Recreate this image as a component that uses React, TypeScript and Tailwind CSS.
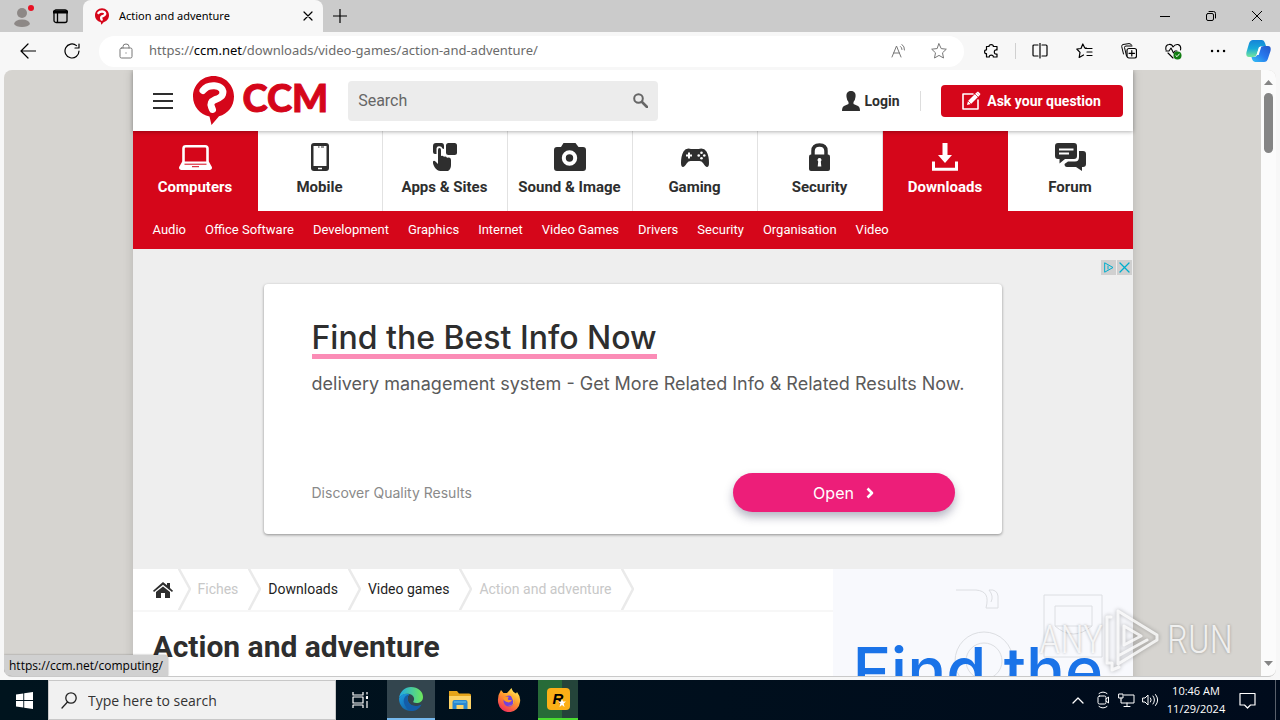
import React from "react";

const UI = "font-['Open_Sans','Noto_Sans',sans-serif]";

function Icon({ w = 20, h = w, box, className = "", children }: { w?: number; h?: number; box?: string; className?: string; children: React.ReactNode }) {
  return (
    <svg width={w} height={h} viewBox={box ?? `0 0 ${w} ${h}`} fill="none" stroke="currentColor" strokeLinecap="round" strokeLinejoin="round" className={`shrink-0 ${className}`} aria-hidden="true">
      {children}
    </svg>
  );
}

function CcmBubble({ w, h }: { w: number; h: number }) {
  return (
    <svg width={w} height={h} viewBox="0 0 41 49" aria-hidden="true" className="shrink-0">
      <path d="M20.500 0C9 0 0 9 0 20.500C0 30.500 7 38.500 16.500 40.500L18.500 49L26 40.300C34.800 38 41 30.300 41 20.500C41 9 32 0 20.500 0Z" fill="#d5061a" />
      <path d="M10 14.500C13 10.500 17 9.500 21.500 9.800C28 10.300 31 14 29.500 18.500C28.500 21.500 25 22.500 22 23.700C18 25.300 17.200 28 18.500 31L19.500 33.500" fill="none" stroke="#fff" strokeWidth="7" strokeLinejoin="round" strokeLinecap="round" />
    </svg>
  );
}

const glyphs: Record<string, React.ReactNode> = {
  Computers: (
    <svg width="33" height="28" viewBox="0 0 33 28" fill="none">
      <path d="M4.500 20V5.500Q4.500 3.200 6.800 3.200H26.200Q28.500 3.200 28.500 5.500V20" stroke="#fff" strokeWidth="2.600" />
      <path d="M3.200 19.500H29.800L33 25.300Q33 28 30.500 28H2.500Q0 28 0 25.300Z" transform="translate(0 -1)" fill="#fff" />
      <path d="M5.500 21.200H27.500M13 23.700H20" stroke="#d5061a" strokeWidth="1" />
    </svg>
  ),
  Mobile: (
    <svg width="18" height="28" viewBox="0 0 18 28">
      <rect width="18" height="28" rx="3" fill="#2e2e2e" />
      <rect x="2.500" y="3" width="13" height="20" fill="#fff" />
      <path d="M7 4H8.500M10 4H13" stroke="#2e2e2e" />
      <path d="M7 25.500H11" stroke="#fff" strokeWidth="1.500" />
    </svg>
  ),
  "Apps & Sites": (
    <svg width="24" height="28" viewBox="0 0 24 28" fill="#2e2e2e">
      <rect x="13" y="0" width="11" height="12" rx="2.500" />
      <path d="M0 3Q0 0 3 0H8.500Q11 0 11 3V6L9.500 5.500Q8.500 2.800 5.800 3.200Q3.300 3.600 3.500 6.500V11H2Q0 11 0 9Z" />
      <path d="M5 7Q5 5 6.500 5Q8 5 8 7V13Q9.500 12 11 13.800Q13 13 14 14.800Q18 13.500 18 17.500V22Q18 26 15 28H7.500Q4 28 1.500 24Q-.5 20.500 0 18.500Q.8 17 2.500 18.500L5 21Z" />
    </svg>
  ),
  "Sound & Image": (
    <svg width="32" height="28" viewBox="0 0 32 28">
      <path d="M3 4H7L9.500 0H21.500L24.500 4H29Q32 4 32 7V25Q32 28 29 28H3Q0 28 0 25V7Q0 4 3 4Z" fill="#2e2e2e" />
      <circle cx="15.500" cy="15" r="5.700" fill="none" stroke="#fff" strokeWidth="4" />
    </svg>
  ),
  Gaming: (
    <svg width="30" height="28" viewBox="0 0 30 28">
      <path d="M3.500 8.500Q6 4.500 11 6H18.500Q24 4.500 26.500 8.500Q29 13 29 20Q29 24 27 24Q25.500 24 23 20Q21.700 18 19.500 18H10.500Q8.300 18 7 20Q4.500 24 3 24Q1 24 1 20Q1 13 3.500 8.500Z" fill="#2e2e2e" />
      <path d="M6 12.500H12M9 9.500V15.500" stroke="#fff" strokeWidth="2" />
      <g fill="#fff"><circle cx="21.500" cy="9.700" r="1.300" /><circle cx="18.700" cy="12.500" r="1.300" /><circle cx="24.300" cy="12.500" r="1.300" /><circle cx="21.500" cy="15.300" r="1.300" /></g>
    </svg>
  ),
  Security: (
    <svg width="21" height="28" viewBox="0 0 21 28">
      <path d="M4 13V8Q4 2 10.500 2Q17 2 17 8V13" fill="none" stroke="#2e2e2e" strokeWidth="3.500" />
      <rect y="11.500" width="21" height="16.500" rx="2" fill="#2e2e2e" />
      <path d="M10.500 15A2 2 0 0 1 11.800 18.500L12.300 23.500H8.700L9.200 18.500A2 2 0 0 1 10.500 15Z" fill="#fff" />
    </svg>
  ),
  Downloads: (
    <svg width="26" height="28" viewBox="0 0 26 28">
      <path d="M10.500 0H15.500V12H20L13 20L6 12H10.500Z" fill="#fff" />
      <path d="M1.500 18.500V26.200H24.500V18.500" fill="none" stroke="#fff" strokeWidth="3" />
    </svg>
  ),
  Forum: (
    <svg width="31" height="28" viewBox="0 0 31 28">
      <path d="M3 0H19Q22 0 22 3V13Q22 16 19 16H10L4.500 20.500V16H3Q0 16 0 13V3Q0 0 3 0Z" fill="#2e2e2e" />
      <path d="M24 8H28Q31 8 31 11V21Q31 24 28 24H27V28L21 24H12Q9.500 24 9.500 21L13 18.500H20Q24 18.500 24 14Z" fill="#2e2e2e" />
      <path d="M4 6.500H18.500M4 10.500H14" stroke="#fff" strokeWidth="2" />
    </svg>
  ),
};

const sections = ["Computers", "Mobile", "Apps & Sites", "Sound & Image", "Gaming", "Security", "Downloads", "Forum"];
const topics = ["Audio", "Office Software", "Development", "Graphics", "Internet", "Video Games", "Drivers", "Security", "Organisation", "Video"];
const crumbs = [
  { label: "Fiches", muted: true },
  { label: "Downloads", muted: false },
  { label: "Video games", muted: false },
  { label: "Action and adventure", muted: true },
];

function TabStrip() {
  return (
    <div className="flex h-8 shrink-0 bg-[#cbcbcb]">
      <div className="flex w-[83px] items-center justify-between pr-[15px] pl-3">
        <button aria-label="Profile" className="relative">
          <svg width="23" height="24" viewBox="0 0 23 24"><circle cx="10" cy="9" r="5" fill="#8d8886" /><path d="M2 20Q3 15.500 10 15.500Q17 15.500 18 20Q16 23 10 23Q4 23 2 20Z" fill="#8d8886" /><circle cx="19" cy="4" r="3" fill="#e81123" /></svg>
        </button>
        <button aria-label="Tab actions">
          <Icon w={15} h={15}><rect x="1" y="1" width="13" height="12.500" rx="2" strokeWidth="1.300" /><path d="M1 3H14" strokeWidth="3" /><path d="M4.500 3V13" strokeWidth="1.300" /></Icon>
        </button>
      </div>
      <div className="flex w-60 items-center rounded-t-lg bg-[#f7f7f7] pr-[10px] pl-3">
        <CcmBubble w={14} h={17} />
        <span className="ml-[10px] flex-1 font-['Noto_Sans',sans-serif] text-[11px] text-black">Action and adventure</span>
        <button aria-label="Close tab"><Icon w={10}><path d="M1 1L9 9M9 1L1 9" strokeWidth="1.200" /></Icon></button>
      </div>
      <button aria-label="New tab" className="ml-[10px]"><Icon w={14}><path d="M7 0V14M0 7H14" strokeWidth="1.200" /></Icon></button>
      <div className="ml-auto flex items-center gap-9 pr-[18px]">
        <button aria-label="Minimize"><Icon w={10}><path d="M0 5.500H10" /></Icon></button>
        <button aria-label="Restore"><Icon w={10}><rect x=".5" y="2.500" width="7" height="7" rx="1.500" /><path d="M3 .5H7.500Q9.500 .5 9.500 2.500V7" /></Icon></button>
        <button aria-label="Close"><Icon w={10}><path d="M0 0L10 10M10 0L0 10" /></Icon></button>
      </div>
    </div>
  );
}

function Toolbar() {
  return (
    <div className="flex h-[38px] shrink-0 items-center pr-[9px] pl-5">
      <button aria-label="Back"><Icon w={16}><path d="M15.500 8H1M8 1L1 8L8 15" strokeWidth="1.200" /></Icon></button>
      <button aria-label="Refresh" className="ml-7"><Icon w={16}><path d="M15 8A7 7 0 1 1 12.500 2.600M15 1V5H11" strokeWidth="1.200" /></Icon></button>
      <div className="ml-[19px] flex h-[31px] flex-1 items-center rounded-full bg-white pr-[17px] pl-5">
        <Icon w={14} h={16} className="text-[#777]"><rect x="1" y="5" width="12" height="10" rx="1.500" /><path d="M4 5V3.500Q4 1 7 1Q10 1 10 3.500V5M7 9.800V10.200" /></Icon>
        <span className="ml-4 flex-1 font-['Noto_Sans',sans-serif] text-[13px] text-[#6b6b6b]">https://<span className="text-black">ccm.net</span>/downloads/video-games/action-and-adventure/</span>
        <button aria-label="Read aloud" className="text-[#777]"><Icon w={16}><path d="M1 14L5.500 3L10 14M2.500 10H8.500M9.500 3.500Q11 4.500 11 6.500M11 1.500Q13.800 3.500 13.500 7" /></Icon></button>
        <button aria-label="Add to favorites" className="ml-6 text-[#777]"><Icon w={16}><path d="M8 .8L10.200 5.600L15.300 6.200L11.500 9.800L12.500 15L8 12.400L3.500 15L4.500 9.800L.7 6.200L5.800 5.600Z" /></Icon></button>
      </div>
      <button aria-label="Extensions" className="ml-5"><Icon w={15}><path d="M2.500 2.500H5Q5 .6 7.200.6Q9.400.6 9.400 2.500H13V6Q10.300 5.500 10.300 8Q10.300 10.500 13 10V13H9.300Q9.500 11.200 7.300 11.200Q5.100 11.200 5.300 13H2.500V9.700Q.6 9.700.6 7.700Q.6 5.800 2.500 5.800Z" strokeWidth="1.200" /></Icon></button>
      <div className="ml-4 h-4 w-px bg-[#d0d0d0]" />
      <button aria-label="Split screen" className="ml-4"><Icon w={16}><path d="M6 2H2Q1 2 1 3V12Q1 13 2 13H6M10 2H14Q15 2 15 3V12Q15 13 14 13H10M8 0V15" strokeWidth="1.200" /></Icon></button>
      <button aria-label="Favorites" className="ml-7"><Icon w={17} h={16}><path d="M10.500 5L8.800 5L6.800 1L5 5.500L.8 6L4 9.400L3.200 14.500L7.500 12M9.500 5.500H16M11 9H16M11 12.500H16" strokeWidth="1.200" /></Icon></button>
      <button aria-label="Collections" className="ml-7"><Icon w={16}><path d="M2.500 11L.7 3.500Q.5 2 2 1.500L8 .6Q10 .5 10.500 2M5.500 13L3.500 4.500Q3.300 3.200 5 3L11 3" /><rect x="6" y="5.500" width="9.500" height="9.500" rx="2" strokeWidth="1.200" /><path d="M10.800 7.500V13M8 10.300H13.500" strokeWidth="1.200" /></Icon></button>
      <button aria-label="Browser essentials" className="ml-7"><Icon w={17} h={17}><path d="M1 7Q0 2 4 1.500Q7 1 8 4Q10 1 13 1.500Q16.500 2.500 15.500 7M3 10L8 15M1 8H4L6 5L8.500 10L10 8H12" strokeWidth="1.100" /><circle cx="12.500" cy="12.500" r="4" fill="#107c10" stroke="none" /><path d="M10.800 12.500L12 13.700L14.300 11" stroke="#fff" /></Icon></button>
      <button aria-label="Settings and more" className="ml-7"><Icon w={16} h={4}><path d="M2 2H2.100M8 2H8.100M14 2H14.100" strokeWidth="2.400" /></Icon></button>
      <button aria-label="Copilot" className="ml-5">
        <svg width="25" height="24" viewBox="0 0 25 24">
          <defs>
            <linearGradient id="cpA" x1="0" y1="0" x2="0" y2="1"><stop stopColor="#1684d8" /><stop offset=".5" stopColor="#18a9d9" /><stop offset="1" stopColor="#76e69b" /></linearGradient>
            <linearGradient id="cpB" x1="0" y1="1" x2="1" y2="0"><stop stopColor="#35c4f5" /><stop offset=".5" stopColor="#2878ed" /><stop offset="1" stopColor="#2656c8" /></linearGradient>
          </defs>
          <path d="M7 1H16Q18 1 19 4L20 7H16Q13.500 7 12.500 10L11 15Q10 18 7 18H3Q-.5 18 .5 13L3 4.500Q4 1 7 1Z" fill="url(#cpA)" />
          <path d="M18 23H9Q7 23 6 20L5.500 18H8Q11 18 12 14L14 9Q15 7 18 7H22Q25.500 7 24.500 12L22 19.500Q21 23 18 23Z" fill="url(#cpB)" />
          <path d="M10.500 16L13 8H15.200L12.700 16Z" fill="#fff" />
        </svg>
      </button>
    </div>
  );
}

function SiteHeader() {
  return (
    <header className="relative z-10 flex h-[61px] items-center bg-white pr-[10px] pl-5 shadow-[0_1px_4px_rgba(0,0,0,0.3)]">
      <button aria-label="Menu" className="text-[#2e2e2e]"><Icon w={20} h={18}><path d="M0 2H20M0 9H20M0 16H20" strokeWidth="2" strokeLinecap="butt" /></Icon></button>
      <a href="#home" className="ml-5 flex items-center gap-[9px] text-[#d5061a]">
        <CcmBubble w={41} h={49} />
        <span className="pb-2 font-['Lato',sans-serif] text-[38px] leading-[42px] font-black [-webkit-text-stroke:1px_#d5061a]">CCM</span>
      </a>
      <form className="ml-5 flex h-10 w-[310px] items-center rounded bg-[#ececec] pr-[10px] pl-[10px]" onSubmit={(e) => e.preventDefault()}>
        <input aria-label="Search" placeholder="Search" className="min-w-0 flex-1 bg-transparent text-base text-[#333] outline-none placeholder:text-[#666]" />
        <button aria-label="Submit search" className="text-[#666]"><Icon w={15}><circle cx="5.500" cy="5.500" r="4.300" strokeWidth="2" /><path d="M9 9L14 14" strokeWidth="2.600" /></Icon></button>
      </form>
      <a href="#login" className="ml-auto flex items-center gap-1 text-sm font-bold text-[#2e2e2e]">
        <svg width="18" height="20" viewBox="0 0 18 20" fill="#2e2e2e" aria-hidden="true"><path d="M9 0C12.500 0 14 2.500 13.500 6Q13.200 9 11.500 11V13L16 15Q18 16 18 20H0Q0 16 2 15L6.500 13V11Q4.800 9 4.500 6C4 2.500 5.500 0 9 0Z" /></svg>
        Login
      </a>
      <div className="mx-5 h-5 w-px bg-[#ddd]" />
      <a href="#ask" className="flex h-8 w-[182px] items-center justify-center gap-[6px] rounded bg-[#d5061a] text-sm font-bold text-white">
        <Icon w={19} h={19}><path d="M11 3H1V18H16V9" strokeWidth="1.600" /><path d="M5 14L6 10L14.500 1.500L17.500 4.500L9 13Z" fill="#fff" stroke="none" /><path d="M14.500 1.500L16 .5L18.500 3L17.500 4.500" fill="#fff" stroke="none" /><path d="M6 10L9 13M13 3L16 6" stroke="#d5061a" strokeWidth=".7" /></Icon>
        Ask your question
      </a>
    </header>
  );
}

function SiteNav() {
  return (
    <nav>
      <ul className="grid grid-cols-8 bg-white">
        {sections.map((s) => {
          const active = s === "Computers" || s === "Downloads";
          return (
            <li key={s} className={active ? "bg-[#d5061a] text-white" : "border-r border-[#e2e2e2] text-[#2e2e2e] last:border-r-0"}>
              <a href={`#${s}`} className="flex h-20 flex-col items-center pt-3 text-[15px] leading-8 font-bold whitespace-nowrap">
                {glyphs[s]}
                {s}
              </a>
            </li>
          );
        })}
      </ul>
      <ul className="flex h-[38px] items-center gap-[19px] bg-[#d5061a] px-5 text-[13px] text-white">
        {topics.map((t) => <li key={t}><a href={`#${t}`}>{t}</a></li>)}
      </ul>
    </nav>
  );
}

function Banner() {
  return (
    <section aria-label="Advertisement" className="relative bg-[#eee] pt-[35px] pb-[35px] font-['Inter',sans-serif]">
      <div className="absolute top-[11px] right-px flex gap-px">
        <a href="#adchoices" aria-label="AdChoices" className="bg-[#d0d0d0] text-[#00aecd]"><Icon w={15}><path d="M4 3L12 7.500L4 12ZM7 6V9" /></Icon></a>
        <button aria-label="Close ad" className="bg-[#d0d0d0] text-[#00aecd]"><Icon w={15}><path d="M3 3L12 12M12 3L3 12" strokeWidth="1.300" /></Icon></button>
      </div>
      <div className="mx-auto flex h-[250px] max-w-[738px] flex-col rounded bg-white pt-[37px] pr-[47px] pb-[22px] pl-12 shadow-[0_1px_3px_rgba(0,0,0,0.4)]">
        <h2 className="w-max border-b-[5px] border-[#fb8cb6] text-[32px] leading-[33px] font-medium text-[#2e2e2e]">Find the Best Info Now</h2>
        <p className="mt-[13px] text-lg leading-6 whitespace-nowrap text-[#5a5a5a]">delivery management system - Get More Related Info &amp; Related Results Now.</p>
        <div className="mt-auto flex items-center justify-between">
          <span className="text-sm text-[#8a8a8a]">Discover Quality Results</span>
          <button className="flex h-[39px] w-[222px] items-center justify-center gap-3 rounded-full bg-[#ed1e79] text-base text-white shadow-[0_5px_10px_rgba(40,40,80,0.35)]">
            Open
            <Icon w={8} h={12}><path d="M1.500 1.500L6 6L1.500 10.500" strokeWidth="2.600" strokeLinecap="butt" /></Icon>
          </button>
        </div>
      </div>
    </section>
  );
}

function Chevron() {
  return <Icon w={13} h={41} className="mr-[7px] text-[#eaeaea]"><path d="M1 0L12 20L1 41" strokeWidth="2.500" /></Icon>;
}

function Content() {
  return (
    <div className="flex">
      <main className="flex-1 bg-white">
        <nav aria-label="Breadcrumb" className="flex h-[43px] items-start border-b-2 border-[#f7f7f7] pl-5 text-[14px] leading-[41px]">
          <a href="#home" aria-label="Home" className="flex h-[41px] items-center pr-[5px]">
            <svg width="20" height="16" viewBox="0 0 20 16" fill="#2e2e2e"><path d="M10 0L14 3.300V1H17V6L20 8.700L19 10L10 2.700L1 10L0 8.700Z" /><path d="M10 4.500L17 10V16H12V11H8V16H3V10Z" /></svg>
          </a>
          <Chevron />
          {crumbs.map((c) => (
            <React.Fragment key={c.label}>
              <a href={`#${c.label}`} className={c.muted ? "pr-[10px] text-[#c8c8c8]" : "pr-[10px] text-[#1e1e1e]"}>{c.label}</a>
              <Chevron />
            </React.Fragment>
          ))}
        </nav>
        <h1 className="px-5 pt-[15px] text-[30px] leading-10 font-bold text-[#2e2e2e]">Action and adventure</h1>
      </main>
      <aside className="relative h-[250px] w-[300px] overflow-hidden bg-[#f8f9fd] px-5 pt-[66px]">
        <svg width="300" height="250" viewBox="0 0 300 250" fill="none" stroke="#dcdee2" className="absolute top-0 left-0" aria-hidden="true">
          <path d="M123 21H143C153 22 156 27 153 39H165V27Q164 20 156 21Q161 27 158 33" />
          <path d="M211 26H269V88H211ZM222 37H259V57H222ZM222 57Q240 73 259 57" />
          <circle cx="151" cy="92" r="29" /><circle cx="151" cy="92" r="18" />
        </svg>
        <p className="relative text-[65px] leading-[72px] font-medium whitespace-nowrap text-[#1a73e8] font-['Inter',sans-serif]">Find the</p>
      </aside>
    </div>
  );
}

function Watermark() {
  return (
    <div className="pointer-events-none absolute right-[43px] bottom-1 flex items-center font-['Liberation_Sans_Narrow','Roboto_Condensed','Roboto',sans-serif] text-[38px] leading-[60px] font-light text-white/80 [text-shadow:0_0_3px_rgba(0,0,0,0.3)]">
      <span>ANY</span>
      <svg width="60" height="64" viewBox="0 0 60 64" fill="none" stroke="#fff" strokeOpacity=".8" strokeWidth="3" strokeLinejoin="round" strokeLinecap="round" className="drop-shadow-[0_0_2px_rgba(0,0,0,0.35)]">
        <path d="M8 9H4V55H9V62L16 59M15 3V48L44 32M15 3L54 27V32L15 56V48M21 18V37L38 28Z" />
      </svg>
      <span className="ml-1">RUN</span>
    </div>
  );
}

function Taskbar() {
  return (
    <footer className="flex h-10 shrink-0 items-center bg-gradient-to-r from-[#00141e] to-[#000b1c] text-white">
      <button aria-label="Start" className="flex h-10 w-12 items-center justify-center">
        <svg width="17" height="17" viewBox="0 0 17 17" fill="#fff"><path d="M0 2.400L7.300 1.400V8H0ZM8.200 1.200L17 0V8H8.200ZM0 8.900H7.300V15.500L0 14.500ZM8.200 8.900H17V17L8.200 15.800Z" /></svg>
      </button>
      <label className="flex h-10 w-72 items-center gap-[11px] border border-[#c8c8c8] bg-[#f1f1f1] pl-3 text-[#222]">
        <Icon w={16} h={17}><circle cx="10" cy="6" r="5.200" strokeWidth="1.300" /><path d="M6.500 10L1 16" strokeWidth="1.300" /></Icon>
        <input aria-label="Search the computer" placeholder="Type here to search" className="min-w-0 flex-1 bg-transparent text-[14px] outline-none placeholder:text-[#333]" />
      </label>
      <button aria-label="Task view" className="flex h-10 w-[51px] items-center justify-center pr-1"><Icon w={16} h={18}><path d="M1 1V4H11V1M1 17V14H11V17M1 6H11V12H1ZM15 1V3.500M15 10V17M14.500 5.500H15.500V7.500H14.500Z" strokeLinecap="butt" strokeWidth="1.200" /></Icon></button>
      <button aria-label="Microsoft Edge" className="flex h-10 w-12 items-center justify-center border-b-2 border-[#76b9ed] bg-[#33454e]">
        <svg width="24" height="24" viewBox="0 0 24 24">
          <defs><linearGradient id="edA"><stop stopColor="#1fa9e8" /><stop offset="1" stopColor="#6ee85a" /></linearGradient><linearGradient id="edB" x1="0" y1="0" x2="1" y2="1"><stop stopColor="#1b9de2" /><stop offset="1" stopColor="#114a8b" /></linearGradient></defs>
          <path d="M0 11C1 4.500 6 0 12 0C19 0 24 4.500 24 10C24 14 21 16 17.500 16C15 16 13.500 15.200 14.500 14C16 12 15 8 10.500 7C6 6 2 8 0 11Z" fill="url(#edA)" />
          <path d="M0 11.500C2 7 7 6 10.500 7.500C8 9 8 13 10 16C12.500 19.500 18 20 22.500 17.500C20 22 16.500 24 12 24C5 24 0 18.500 0 11.500Z" fill="url(#edB)" />
          <path d="M10.500 7.500C6 8 4 12 5 16C6 20 9 23 12 24C16.500 24 20 22 22.500 17.500C18 20 12.500 19.500 10 16C8 13 8 9 10.500 7.500Z" fill="#145da8" />
        </svg>
      </button>
      <button aria-label="File Explorer" className="flex h-10 w-[50px] items-center justify-center">
        <svg width="22" height="19" viewBox="0 0 22 19"><path d="M0 0H8L10 2.500H20Q22 2.500 22 4V18H0Z" fill="#e5a41a" /><path d="M0 5H22V18H0Z" fill="#fdd367" /><path d="M3.500 18V11Q3.500 9 5.500 9H16.500Q18.500 9 18.500 11V18H14.500V14H7.500V18Z" fill="#2b88d0" /><path d="M5 11H17" stroke="#65c2ef" /></svg>
      </button>
      <button aria-label="Firefox" className="flex h-10 w-12 items-center justify-center">
        <svg width="24" height="24" viewBox="0 0 24 24">
          <defs><linearGradient id="ffA" x1=".8" y1="0" x2=".2" y2="1"><stop stopColor="#fff05a" /><stop offset=".45" stopColor="#ff9a2c" /><stop offset="1" stopColor="#f0245f" /></linearGradient></defs>
          <path d="M4 2L6.500 5L10 5L14.500 0Q15.500 4 19 5.500L20 4Q24 9 23 14A11 11 0 0 1 1.200 15Q0 8 4 2Z" fill="url(#ffA)" />
          <circle cx="12" cy="13" r="5.500" fill="#7542dc" />
          <path d="M6 10Q9 7.500 12 9Q10 10.500 11.500 12H15Q13 15.500 10 14Q7 13.500 6 10Z" fill="#ff9824" /><path d="M13 6Q19 8 17.500 14Q16 18.500 11 18Q19 17 15 10Z" fill="#ffb42e" />
        </svg>
      </button>
      <button aria-label="Launcher" className="ml-[5px] flex h-10 w-10 items-center justify-center border-b-2 border-[#4bdc2f] bg-gradient-to-r from-[#276b38] from-60% to-[#24443a] to-60%">
        <span className="relative flex h-[22px] w-[23px] items-center justify-center rounded bg-[#fcaf17] font-['Liberation_Sans',sans-serif] text-[15px] font-bold text-black italic">
          R
          <svg width="8" height="8" viewBox="0 0 8 8" className="absolute right-1 bottom-[3px]"><path d="M4 0L5 2.600H8L5.700 4.500L6.500 8L4 6L1.500 8L2.300 4.500L0 2.600H3Z" fill="#fff" /></svg>
        </span>
      </button>
      <div className="ml-auto flex h-full items-center">
        <button aria-label="Show hidden icons"><Icon w={12} h={8}><path d="M1 7L6 2L11 7" strokeWidth="1.300" /></Icon></button>
        <button aria-label="Meet now" className="ml-3"><Icon w={14} h={18}><path d="M3 2.500Q7-.5 11 2.500M3 15.500Q7 18.500 11 15.500M10 8L12.500 6V12L10 10" /><rect x="2" y="5" width="8" height="8" rx="1.500" /></Icon></button>
        <button aria-label="Network" className="ml-2"><Icon w={17} h={15}><path d="M6 2H16V10H3V7M9 10V13M6 13.500H12" /><path d="M1 1H5V5H1ZM3 5V7" /></Icon></button>
        <button aria-label="Volume" className="ml-[7px]"><Icon w={17} h={14}><path d="M1 5H3L6 2V12L3 9H1ZM8.500 5Q10 7 8.500 9M11 3Q14 7 11 11M13.500 1.500Q18 7 13.500 12.500" /></Icon></button>
        <div className="ml-1 w-[66px] text-center text-[11px] leading-[18px]"><div>10:46 AM</div><div>11/29/2024</div></div>
        <button aria-label="Notifications" className="ml-[10px]"><Icon w={17} h={17}><path d="M1 1.500H16V13H11.500L8.500 16L5.500 13H1Z" strokeWidth="1.200" /></Icon></button>
        <div className="ml-[19px] h-full w-[5px] border-l border-[#59606b]" />
      </div>
    </footer>
  );
}

export default function App() {
  return (
    <div className={`flex h-screen flex-col overflow-hidden bg-[#f7f7f7] ${UI}`}>
      <TabStrip />
      <Toolbar />
      <div className="relative mx-1 mb-[3px] flex min-h-0 flex-1 overflow-hidden rounded-lg border-b border-[#c9c9c9] bg-[#d6d4d0]">
        <div className="min-w-0 flex-1 overflow-hidden font-['Roboto',sans-serif]">
          <div className="mx-auto max-w-[1000px] shadow-[0_0_10px_rgba(0,0,0,0.15)]">
            <SiteHeader />
            <SiteNav />
            <Banner />
            <Content />
          </div>
        </div>
        <div className="flex w-[15px] flex-col items-center justify-between bg-[#fbfbfb] pt-[10px] pb-[10px] text-[#858585]">
          <div className="flex flex-col items-center gap-2">
            <svg width="9" height="5" viewBox="0 0 9 5"><path d="M0 5L4.500 0L9 5Z" fill="currentColor" /></svg>
            <div className="h-[60px] w-[9px] rounded-full bg-[#858585]" />
          </div>
          <svg width="9" height="5" viewBox="0 0 9 5"><path d="M0 0L4.500 5L9 0Z" fill="currentColor" /></svg>
        </div>
        <div className="absolute bottom-0 left-0 rounded-tr bg-[#d0d0d0] px-[5px] text-xs leading-[21px] text-black shadow-[0_0_2px_rgba(0,0,0,0.4)]">https://ccm.net/computing/</div>
        <Watermark />
      </div>
      <Taskbar />
    </div>
  );
}
